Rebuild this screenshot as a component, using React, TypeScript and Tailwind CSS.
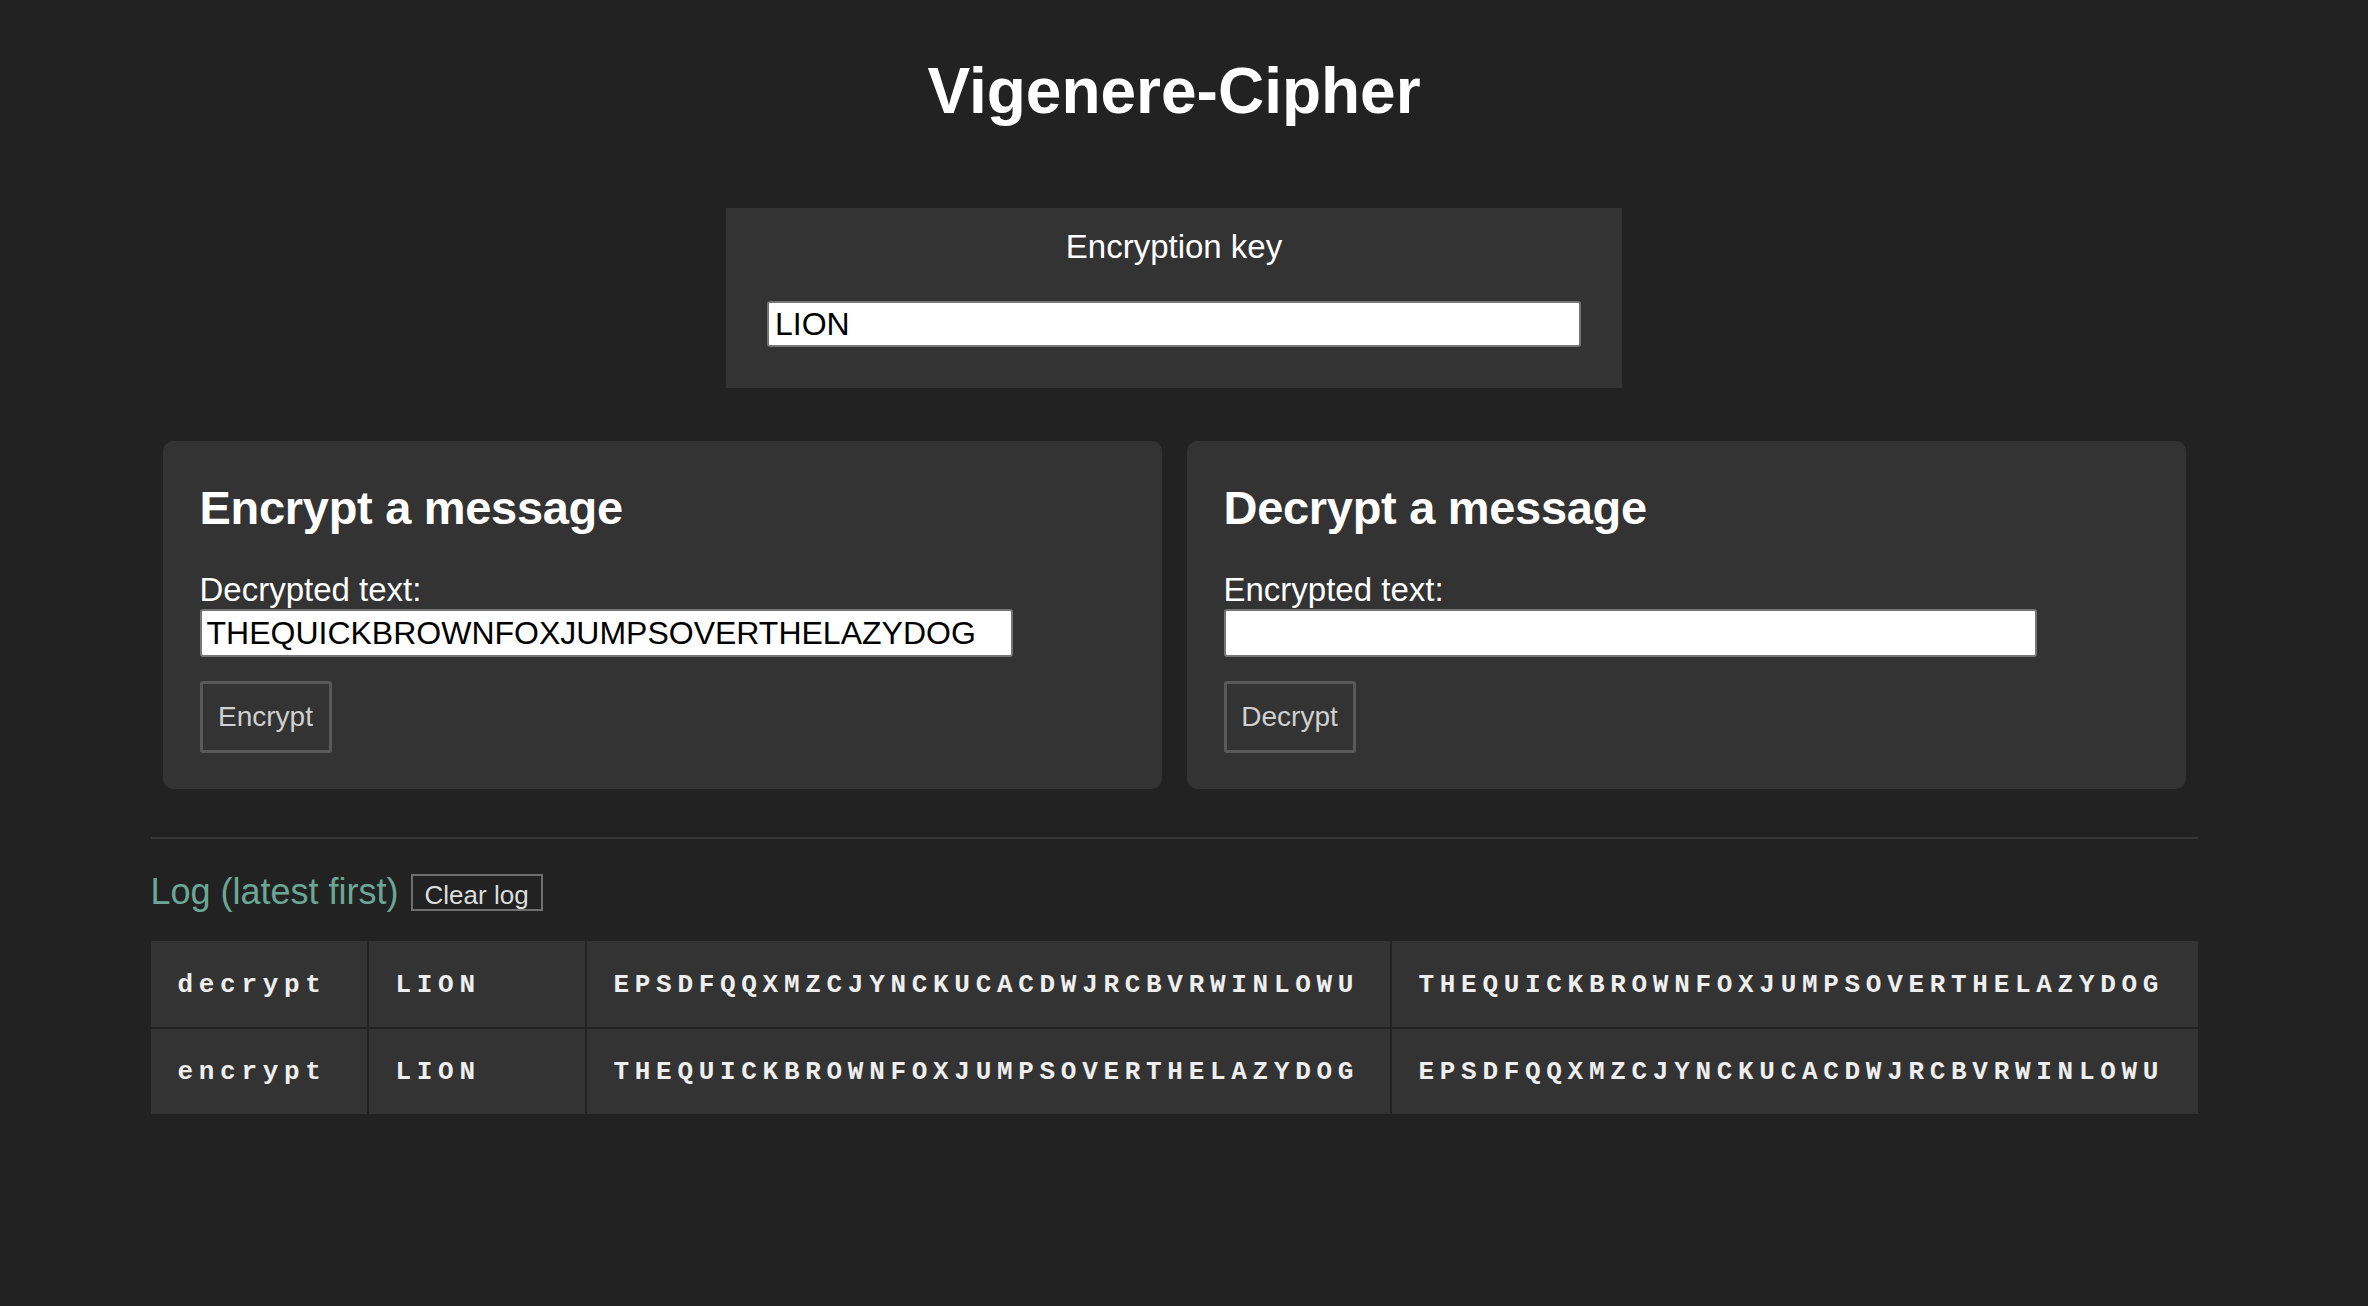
import React, { useState } from "react";

interface LogEntry {
  mode: string;
  key: string;
  input: string;
  output: string;
}

const sans = "font-['Liberation_Sans',Arial,sans-serif]";

const CipherCard: React.FC<{
  title: string;
  label: string;
  value: string;
  action: string;
}> = ({ title, label, value, action }) => {
  const [text, setText] = useState(value);
  return (
    <div className="bg-[#333333] rounded-[10px] pt-[43px] px-[37px] pb-[36px]">
      <h2 className="text-[47px] leading-[47px] font-bold text-white tracking-[-0.3px]">{title}</h2>
      <label className="block mt-[42px] text-[33px] leading-[33px] text-white">{label}</label>
      <input
        value={text}
        onChange={(e) => setText(e.target.value)}
        className={`block mt-[3px] w-[813px] h-[48px] bg-white border-2 border-[#767676] rounded-[3px] px-[5px] text-[32px] text-black outline-none ${sans}`}
      />
      <button className="block mt-[24px] w-[132px] h-[72px] border-[3px] border-[#595959] rounded-[3px] text-[28px] text-[#d0d0d0]">
        {action}
      </button>
    </div>
  );
};

const App: React.FC = () => {
  const [key, setKey] = useState("LION");
  const log: LogEntry[] = [
    {
      mode: "decrypt",
      key: "LION",
      input: "EPSDFQQXMZCJYNCKUCACDWJRCBVRWINLOWU",
      output: "THEQUICKBROWNFOXJUMPSOVERTHELAZYDOG",
    },
    {
      mode: "encrypt",
      key: "LION",
      input: "THEQUICKBROWNFOXJUMPSOVERTHELAZYDOG",
      output: "EPSDFQQXMZCJYNCKUCACDWJRCBVRWINLOWU",
    },
  ];

  return (
    <div className={`min-h-screen bg-[#222222] ${sans}`}>
      <div className="w-[2348px] pt-[59px] pb-[40px]">
        <h1 className="text-center text-[64px] leading-[64px] font-bold text-white">Vigenere-Cipher</h1>

        {/* key */}
        <div className="mt-[85px] mx-auto w-[896px] bg-[#333333] pt-[22px] px-[41px] pb-[41px]">
          <div className="text-center text-[33px] leading-[33px] text-white">Encryption key</div>
          <input
            value={key}
            onChange={(e) => setKey(e.target.value)}
            className={`block mt-[38px] w-[814px] h-[46px] bg-white border-2 border-[#767676] rounded-[3px] px-[6px] text-[32px] text-black outline-none ${sans}`}
          />
        </div>

        <div className="mx-auto w-[2047px]">
          <div className="mt-[53px] px-[12px] grid grid-cols-2 gap-[25px]">
            <CipherCard
              title="Encrypt a message"
              label="Decrypted text:"
              value="THEQUICKBROWNFOXJUMPSOVERTHELAZYDOG"
              action="Encrypt"
            />
            <CipherCard title="Decrypt a message" label="Encrypted text:" value="" action="Decrypt" />
          </div>

          <div className="mt-[48px] h-[2px] bg-[#383838]" />

          <div className="mt-[34px] h-[40px] flex items-baseline">
            <span className="text-[36px] leading-[37px] text-[#6ba795]">Log (latest first)</span>
            <button className="ml-[12px] w-[132px] h-[37px] border-2 border-[#6f6f6f] text-[26px] text-[#dddddd]">
              Clear log
            </button>
          </div>

          <div className="mt-[28px] grid grid-cols-[216px_216px_803px_806px] gap-[2px]">
            {log.map((row, i) => (
              <React.Fragment key={i}>
                {[row.mode, row.key, row.input, row.output].map((cell, j) => (
                  <div
                    key={j}
                    className={`${i === 0 ? "h-[86px]" : "h-[85px]"} bg-[#333333] flex items-center pl-[27px] pt-[2px] font-['Liberation_Mono','Courier_New',monospace] font-bold text-[26px] tracking-[5.7px] text-[#eeeeee] whitespace-nowrap`}
                  >
                    {cell}
                  </div>
                ))}
              </React.Fragment>
            ))}
          </div>
        </div>
      </div>
    </div>
  );
};

export default App;
